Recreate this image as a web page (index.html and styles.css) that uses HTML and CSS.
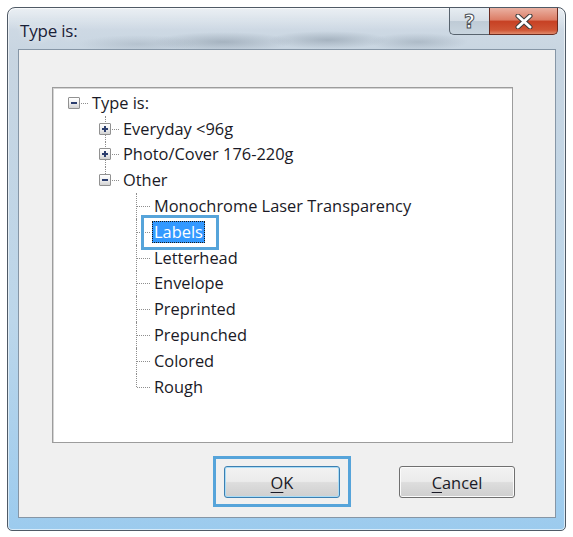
FILE: index.html
```html
<!DOCTYPE html>
<html lang="en">
<head>
    <meta charset="UTF-8">
    <meta name="viewport" content="width=device-width, initial-scale=1.0">
    <title>Type is:</title>
    <link rel="stylesheet" href="styles.css">
</head>
<body>
    <div class="window">
        <div class="titlebar">
            <span class="title">Type is:</span>
            <div class="caption-buttons">
                <span class="cap-btn help">?</span>
                <span class="cap-btn close">
                    <svg width="20" height="15" viewBox="0 0 20 15">
                        <path d="M4 2 L16 13 M16 2 L4 13" stroke="#3b3b3b" stroke-width="5" stroke-linecap="round"/>
                        <path d="M4 2 L16 13 M16 2 L4 13" stroke="#ffffff" stroke-width="3" stroke-linecap="round"/>
                    </svg>
                </span>
            </div>
        </div>

        <div class="client">
            <div class="tree">
                <div class="node root">
                    <span class="lead"><span class="toggle minus"></span></span>
                    <span class="label">Type is:</span>
                </div>
                <div class="node lvl1">
                    <span class="lead"><span class="toggle plus"></span></span>
                    <span class="label">Everyday &lt;96g</span>
                </div>
                <div class="node lvl1">
                    <span class="lead"><span class="toggle plus"></span></span>
                    <span class="label">Photo/Cover 176-220g</span>
                </div>
                <div class="node lvl1 last">
                    <span class="lead"><span class="toggle minus"></span></span>
                    <span class="label">Other</span>
                </div>
                <div class="node lvl2">
                    <span class="lead"></span>
                    <span class="label">Monochrome Laser Transparency</span>
                </div>
                <div class="node lvl2">
                    <span class="lead"></span>
                    <span class="label selected">Labels<span class="callout"></span></span>
                </div>
                <div class="node lvl2">
                    <span class="lead"></span>
                    <span class="label">Letterhead</span>
                </div>
                <div class="node lvl2">
                    <span class="lead"></span>
                    <span class="label">Envelope</span>
                </div>
                <div class="node lvl2">
                    <span class="lead"></span>
                    <span class="label">Preprinted</span>
                </div>
                <div class="node lvl2">
                    <span class="lead"></span>
                    <span class="label">Prepunched</span>
                </div>
                <div class="node lvl2">
                    <span class="lead"></span>
                    <span class="label">Colored</span>
                </div>
                <div class="node lvl2 last">
                    <span class="lead"></span>
                    <span class="label">Rough</span>
                </div>
            </div>

            <div class="buttons">
                <span class="btn-wrap">
                    <button class="btn default"><u>O</u>K</button>
                    <span class="callout"></span>
                </span>
                <button class="btn"><u>C</u>ancel</button>
            </div>
        </div>
    </div>
</body>
</html>
```

FILE: styles.css
```css
/* General Reset */
* {
    margin: 0;
    padding: 0;
    box-sizing: border-box;
}

body {
    background: #ffffff;
    font-family: "Open Sans", "Noto Sans", sans-serif;
    color: #1a1a26;
}

/* Glass window frame */
.window {
    margin: 7px 0 0 7px;
    width: 559px;
    height: 524px;
    border: 1px solid #4f5a66;
    border-radius: 8px 8px 5px 5px;
    padding: 0 9px 12px 10px;
    display: flex;
    flex-direction: column;
    background:
        radial-gradient(ellipse 60px 9px at 130px 36px, rgba(120, 135, 150, 0.25), transparent),
        radial-gradient(ellipse 70px 10px at 215px 34px, rgba(110, 125, 140, 0.4), transparent),
        radial-gradient(ellipse 60px 9px at 320px 32px, rgba(110, 125, 140, 0.4), transparent),
        radial-gradient(ellipse 50px 9px at 410px 34px, rgba(120, 135, 150, 0.35), transparent),
        linear-gradient(180deg, rgba(255, 255, 255, 0.55) 0, rgba(255, 255, 255, 0) 22px),
        linear-gradient(180deg, #d2dce6 0, #c8d5e1 45px, #bcd6ea 60%, #9ccbee 100%);
    box-shadow: inset 0 0 0 1px rgba(255, 255, 255, 0.6);
}

.titlebar {
    height: 41px;
    display: flex;
    align-items: flex-start;
    flex: none;
}

.title {
    padding: 13px 0 0 2px;
    font-size: 17px;
    line-height: 20px;
    letter-spacing: -0.2px;
    color: #1a2138;
    text-shadow: 0 0 6px rgba(255, 255, 255, 0.9);
}

.caption-buttons {
    margin-left: auto;
    margin-right: -2px;
    display: flex;
}

.cap-btn {
    height: 27px;
    display: flex;
    align-items: center;
    justify-content: center;
    border: 1px solid #58636e;
    border-top: none;
}

.help {
    width: 40px;
    border-right: none;
    border-radius: 0 0 0 5px;
    background: linear-gradient(180deg, #e7edf2 0, #d6dee6 48%, #bfcbd6 52%, #c9d5df 100%);
    font: bold 19px "DejaVu Sans", sans-serif;
    color: #ffffff;
    -webkit-text-stroke: 1px #4a4f55;
}

.close {
    width: 69px;
    border-color: #6a2b20;
    border-radius: 0 0 5px 0;
    background: linear-gradient(180deg, #eab1a2 0, #dc7d66 45%, #c74124 52%, #cf5535 85%, #e08a6c 100%);
}

/* Dialog body */
.client {
    flex: 1;
    background: #f0f0f0;
    border: 1px solid #8696a6;
    display: flex;
    flex-direction: column;
}

.tree {
    margin: 37px 0 0 33px;
    width: 461px;
    height: 356px;
    background: #ffffff;
    border: 1px solid #9c9c9c;
    box-shadow: inset 1px 1px 0 #d4d4d4;
    padding: 2px 0 0 11px;
    font-size: 16.4px;
}

.node {
    position: relative;
    height: 25.8px;
    display: flex;
    align-items: center;
}

.lvl1 {
    padding-left: 31px;
}

.lvl2 {
    padding-left: 62px;
}

/* Connector lines */
.lead {
    position: relative;
    width: 26px;
    height: 100%;
    flex: none;
}

.lead::before {
    content: "";
    position: absolute;
    left: 10px;
    top: 0;
    bottom: 0;
    border-left: 1px dotted #8e8e8e;
}

.last .lead::before {
    bottom: 50%;
}

.root .lead::before {
    display: none;
}

.lead::after {
    content: "";
    position: absolute;
    left: 11px;
    width: 13px;
    top: 50%;
    border-top: 1px dotted #8e8e8e;
}

.toggle {
    position: absolute;
    left: 4px;
    top: calc(50% - 6px);
    width: 12px;
    height: 12px;
    border: 1px solid #919191;
    border-radius: 1px;
    background: linear-gradient(180deg, #ffffff 0, #f0f0f0 50%, #d2d2d2 100%);
    z-index: 1;
}

.toggle::before,
.toggle.plus::after {
    content: "";
    position: absolute;
    background: #2c3e6e;
}

.toggle::before {
    left: 2px;
    top: 4px;
    width: 6px;
    height: 2px;
}

.toggle.plus::after {
    left: 4px;
    top: 2px;
    width: 2px;
    height: 6px;
}

.label {
    padding: 0 2px;
    line-height: 22px;
    white-space: nowrap;
}

.label.selected {
    position: relative;
    background: #3399ff;
    color: #ffffff;
    outline: 1px dotted #1a1a1a;
    outline-offset: -1px;
}

.callout {
    position: absolute;
    border: 3px solid #56a4da;
    pointer-events: none;
}

.label .callout {
    top: -6px;
    bottom: -7px;
    left: -11px;
    right: -14px;
}

/* Dialog buttons */
.buttons {
    margin-top: 23px;
    padding-right: 40px;
    display: flex;
    justify-content: flex-end;
    gap: 59px;
}

.btn-wrap {
    position: relative;
    display: flex;
}

.btn-wrap .callout {
    top: -10px;
    bottom: -9px;
    left: -11px;
    right: -11px;
}

.btn {
    width: 116px;
    height: 32px;
    border: 1px solid #707070;
    border-radius: 3px;
    background: linear-gradient(180deg, #f2f2f2 0, #ebebeb 48%, #dddddd 52%, #cfcfcf 100%);
    box-shadow: inset 0 0 0 1px #fbfbfb;
    font-family: "Open Sans", "Noto Sans", sans-serif;
    font-size: 16.4px;
    color: #1a1a26;
}

.btn.default {
    border-color: #3c7fb1;
    box-shadow: inset 0 0 0 1px #a9dcf6;
}

.btn u {
    text-decoration-thickness: 1px;
    text-underline-offset: 3px;
}
```
